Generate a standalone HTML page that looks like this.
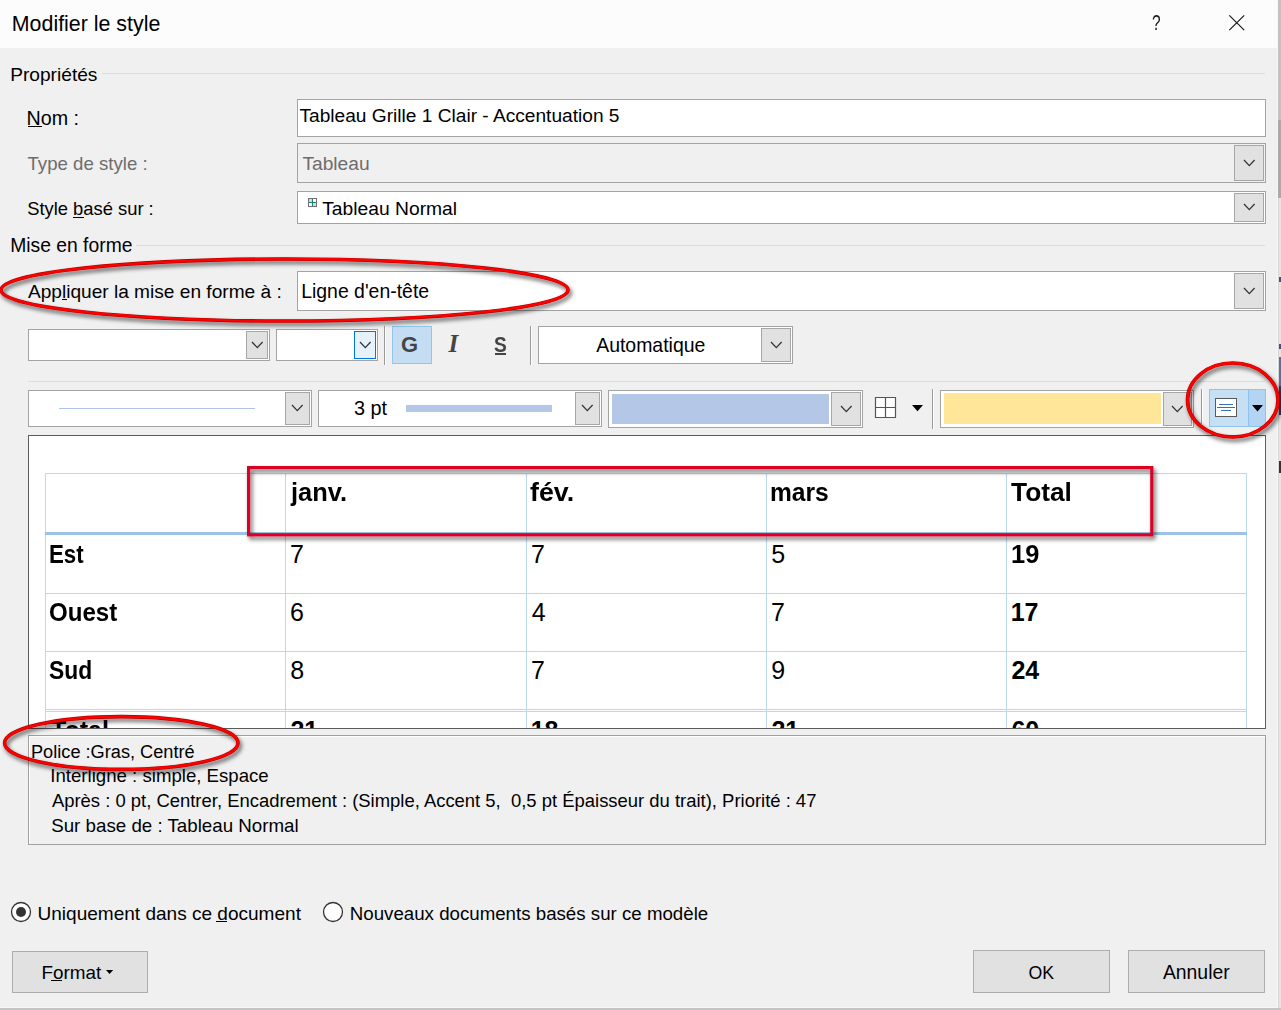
<!DOCTYPE html><html><head><meta charset="utf-8"><style>
html,body{margin:0;padding:0;}
body{width:1281px;height:1010px;position:relative;overflow:hidden;background:#c8c8c8;font-family:"Liberation Sans",sans-serif;}
.t{position:absolute;line-height:1;white-space:pre;}
.r{position:absolute;}
u{text-decoration:none;border-bottom:1px solid currentColor;}
</style></head><body>
<div class="r" style="left:0px;top:0px;width:1278px;height:1008px;background:#f0f0f0;"></div>
<div class="r" style="left:0px;top:0px;width:1278px;height:48px;background:#fcfcfc;"></div>
<div class="t" style="left:11.8px;top:14.00px;font-size:21.39px;color:#000;font-weight:normal;">Modifier le style</div>
<div class="t" style="left:1151.8px;top:13.00px;font-size:21.5px;color:#1a1a1a;font-weight:normal;transform:scaleX(0.72);transform-origin:0 0;">?</div>
<svg class="r" style="left:1228px;top:14px" width="18" height="18"><path d="M1.3,1.3 L16.2,16.2 M16.2,1.3 L1.3,16.2" stroke="#1a1a1a" stroke-width="1.2"/></svg>
<div class="t" style="left:10.2px;top:65.00px;font-size:19.15px;color:#000;font-weight:normal;">Propriétés</div>
<div class="r" style="left:102px;top:73px;width:1163px;height:1px;background:#dcdcdc;"></div>
<div class="t" style="left:26.5px;top:109.00px;font-size:19.7px;color:#000;font-weight:normal;">Nom :</div>
<div class="r" style="left:28px;top:126px;width:14px;height:1px;background:#000;"></div>
<div class="r" style="left:297px;top:99px;width:969px;height:38px;background:#fff;border:1px solid #a3a3a3;box-sizing:border-box;"></div>
<div class="t" style="left:299.5px;top:106.00px;font-size:19.14px;color:#000;font-weight:normal;">Tableau Grille 1 Clair - Accentuation 5</div>
<div class="t" style="left:27.5px;top:155.00px;font-size:18.64px;color:#6d6d6d;font-weight:normal;">Type de style :</div>
<div class="r" style="left:297px;top:143px;width:969px;height:40px;background:#f0f0f0;border:1px solid #a3a3a3;box-sizing:border-box;"></div>
<div class="r" style="left:1234px;top:145px;width:30px;height:36px;background:#e1e1e1;border:1px solid #a6a6a6;box-sizing:border-box;"></div>
<svg class="r" style="left:1241.6px;top:157.6px" width="14.6" height="9.6"><polyline points="2,2 7.3,7.6 12.6,2" fill="none" stroke="#333" stroke-width="1.25"/></svg>
<div class="t" style="left:302.4px;top:154.00px;font-size:19.21px;color:#6d6d6d;font-weight:normal;">Tableau</div>
<div class="t" style="left:27.2px;top:200.00px;font-size:18.36px;color:#000;font-weight:normal;">Style basé sur :</div>
<div class="r" style="left:73px;top:217px;width:11px;height:1px;background:#000;"></div>
<div class="r" style="left:297px;top:191px;width:969px;height:33px;background:#fff;border:1px solid #a3a3a3;box-sizing:border-box;"></div>
<div class="r" style="left:1234px;top:193px;width:30px;height:29px;background:#e1e1e1;border:1px solid #a6a6a6;box-sizing:border-box;"></div>
<svg class="r" style="left:1241.6px;top:202.1px" width="14.6" height="9.6"><polyline points="2,2 7.3,7.6 12.6,2" fill="none" stroke="#333" stroke-width="1.25"/></svg>
<div class="r" style="left:308px;top:198px;width:9px;height:9px;background:#fff;border:1px solid #707070;box-sizing:border-box;"></div>
<div class="r" style="left:309px;top:199px;width:3px;height:3px;background:#d6d6d6;"></div>
<div class="r" style="left:313px;top:203px;width:3px;height:3px;background:#d2d9e6;"></div>
<div class="r" style="left:312px;top:199px;width:1px;height:7px;background:#108a72;"></div>
<div class="r" style="left:309px;top:202px;width:7px;height:1px;background:#108a72;"></div>
<div class="t" style="left:322.2px;top:199.00px;font-size:19.28px;color:#000;font-weight:normal;">Tableau Normal</div>
<div class="t" style="left:10.2px;top:236.00px;font-size:19.31px;color:#000;font-weight:normal;">Mise en forme</div>
<div class="r" style="left:136px;top:245px;width:1129px;height:1px;background:#dcdcdc;"></div>
<div class="t" style="left:27.9px;top:282.00px;font-size:19.11px;color:#000;font-weight:normal;">Appliquer la mise en forme à :</div>
<div class="r" style="left:62px;top:299px;width:5px;height:1px;background:#000;"></div>
<div class="r" style="left:297px;top:271px;width:969px;height:40px;background:#fff;border:1px solid #a3a3a3;box-sizing:border-box;"></div>
<div class="r" style="left:1234px;top:273px;width:30px;height:36px;background:#e1e1e1;border:1px solid #a6a6a6;box-sizing:border-box;"></div>
<svg class="r" style="left:1241.6px;top:285.6px" width="14.6" height="9.6"><polyline points="2,2 7.3,7.6 12.6,2" fill="none" stroke="#333" stroke-width="1.25"/></svg>
<div class="t" style="left:301.2px;top:282.00px;font-size:19.43px;color:#000;font-weight:normal;">Ligne d'en-tête</div>
<div class="r" style="left:28px;top:329px;width:242px;height:32px;background:#fff;border:1px solid #a3a3a3;box-sizing:border-box;"></div>
<div class="r" style="left:246px;top:331px;width:22px;height:28px;background:#e1e1e1;border:1px solid #a6a6a6;box-sizing:border-box;"></div>
<svg class="r" style="left:249.6px;top:339.6px" width="14.6" height="9.6"><polyline points="2,2 7.3,7.6 12.6,2" fill="none" stroke="#333" stroke-width="1.25"/></svg>
<div class="r" style="left:276px;top:329px;width:102px;height:32px;background:#fff;border:1px solid #a3a3a3;box-sizing:border-box;"></div>
<div class="r" style="left:354px;top:331px;width:22px;height:28px;background:#e5f1fb;border:1px solid #0078d7;box-sizing:border-box;"></div>
<svg class="r" style="left:357.6px;top:339.6px" width="14.6" height="9.6"><polyline points="2,2 7.3,7.6 12.6,2" fill="none" stroke="#333" stroke-width="1.25"/></svg>
<div class="r" style="left:384px;top:326px;width:1px;height:39px;background:#999;"></div>
<div class="r" style="left:385px;top:326px;width:1px;height:39px;background:#fff;"></div>
<div class="r" style="left:392px;top:326px;width:40px;height:38px;background:#c4ddf3;border:1px solid #90c6f0;box-sizing:border-box;"></div>
<div class="t" style="left:400.9px;top:334.00px;font-size:22px;color:#444;font-weight:bold;">G</div>
<div class="t" style="left:448.4px;top:331.00px;font-size:25px;color:#444;font-weight:bold;font-family:Liberation Serif,serif;font-style:italic;">I</div>
<div class="t" style="left:494.1px;top:334.00px;font-size:22.5px;color:#444;font-weight:bold;transform:scaleX(0.85);transform-origin:0 0;">S</div>
<div class="r" style="left:495px;top:353px;width:11px;height:2px;background:#444;"></div>
<div class="r" style="left:530px;top:326px;width:1px;height:39px;background:#999;"></div>
<div class="r" style="left:531px;top:326px;width:1px;height:39px;background:#fff;"></div>
<div class="r" style="left:538px;top:326px;width:255px;height:38px;background:#fff;border:1px solid #a3a3a3;box-sizing:border-box;"></div>
<div class="r" style="left:761px;top:328px;width:30px;height:34px;background:#e1e1e1;border:1px solid #a6a6a6;box-sizing:border-box;"></div>
<svg class="r" style="left:768.6px;top:339.6px" width="14.6" height="9.6"><polyline points="2,2 7.3,7.6 12.6,2" fill="none" stroke="#333" stroke-width="1.25"/></svg>
<div class="t" style="left:596.2px;top:336.00px;font-size:19.44px;color:#000;font-weight:normal;">Automatique</div>
<div class="r" style="left:28px;top:381px;width:1237px;height:1px;background:#dcdcdc;"></div>
<div class="r" style="left:28px;top:390px;width:284px;height:37px;background:#fff;border:1px solid #a3a3a3;box-sizing:border-box;"></div>
<div class="r" style="left:285px;top:392px;width:25px;height:33px;background:#e1e1e1;border:1px solid #a6a6a6;box-sizing:border-box;"></div>
<svg class="r" style="left:290.1px;top:403.1px" width="14.6" height="9.6"><polyline points="2,2 7.3,7.6 12.6,2" fill="none" stroke="#333" stroke-width="1.25"/></svg>
<div class="r" style="left:59px;top:408px;width:196px;height:1px;background:#b0c4e8;"></div>
<div class="r" style="left:318px;top:390px;width:284px;height:37px;background:#fff;border:1px solid #a3a3a3;box-sizing:border-box;"></div>
<div class="r" style="left:575px;top:392px;width:25px;height:33px;background:#e1e1e1;border:1px solid #a6a6a6;box-sizing:border-box;"></div>
<svg class="r" style="left:580.1px;top:403.1px" width="14.6" height="9.6"><polyline points="2,2 7.3,7.6 12.6,2" fill="none" stroke="#333" stroke-width="1.25"/></svg>
<div class="t" style="left:353.9px;top:399.00px;font-size:19.88px;color:#000;font-weight:normal;">3 pt</div>
<div class="r" style="left:406px;top:405px;width:146px;height:7px;background:#b4c7e7;"></div>
<div class="r" style="left:608px;top:390px;width:255px;height:38px;background:#fff;border:1px solid #a3a3a3;box-sizing:border-box;"></div>
<div class="r" style="left:831px;top:392px;width:30px;height:34px;background:#e1e1e1;border:1px solid #a6a6a6;box-sizing:border-box;"></div>
<svg class="r" style="left:838.6px;top:403.6px" width="14.6" height="9.6"><polyline points="2,2 7.3,7.6 12.6,2" fill="none" stroke="#333" stroke-width="1.25"/></svg>
<div class="r" style="left:612px;top:394px;width:217px;height:30px;background:#b4c7e7;"></div>
<svg class="r" style="left:874px;top:396px" width="24" height="24"><path d="M1.5,1.5 H21.5 V21.5 H1.5 Z" fill="#fff"/><path d="M1.5,1.5 H21.5 V21.5 H1.5 Z M11.5,1.5 V21.5 M1.5,11.5 H21.5" fill="none" stroke="#555" stroke-width="1.2"/></svg>
<svg class="r" style="left:912px;top:405px" width="12" height="7"><path d="M0,0 H11 L5.5,6.3 Z" fill="#000"/></svg>
<div class="r" style="left:932px;top:389px;width:1px;height:40px;background:#999;"></div>
<div class="r" style="left:933px;top:389px;width:1px;height:40px;background:#fff;"></div>
<div class="r" style="left:940px;top:390px;width:254px;height:38px;background:#fff;border:1px solid #a3a3a3;box-sizing:border-box;"></div>
<div class="r" style="left:1163px;top:392px;width:29px;height:34px;background:#e1e1e1;border:1px solid #a6a6a6;box-sizing:border-box;"></div>
<svg class="r" style="left:1170.1px;top:403.6px" width="14.6" height="9.6"><polyline points="2,2 7.3,7.6 12.6,2" fill="none" stroke="#333" stroke-width="1.25"/></svg>
<div class="r" style="left:944px;top:393px;width:217px;height:31px;background:#ffe699;"></div>
<div class="r" style="left:1201px;top:389px;width:1px;height:35px;background:#999;"></div>
<div class="r" style="left:1202px;top:389px;width:1px;height:35px;background:#fff;"></div>
<div class="r" style="left:1209px;top:389px;width:57px;height:38px;background:#c5dff5;border:1px solid #8fc3ee;box-sizing:border-box;"></div>
<div class="r" style="left:1248px;top:389px;width:18px;height:38px;background:#b3d5f3;border:1px solid #8fc3ee;box-sizing:border-box;"></div>
<div class="r" style="left:1215px;top:398px;width:22px;height:19px;background:#fff;border:1px solid #5a5a5a;box-sizing:border-box;"></div>
<div class="r" style="left:1219px;top:404px;width:14px;height:1px;background:#2e75b6;"></div>
<div class="r" style="left:1217px;top:407px;width:18px;height:1px;background:#2e75b6;"></div>
<div class="r" style="left:1221px;top:410px;width:10px;height:1px;background:#2e75b6;"></div>
<svg class="r" style="left:1252px;top:405px" width="12" height="7"><path d="M0,0 H11 L5.5,6.5 Z" fill="#000"/></svg>
<div class="r" style="left:28px;top:435px;width:1238px;height:294px;background:#fff;border:1px solid #5c5c5c;box-sizing:border-box;overflow:hidden;"></div>
<div class="r" style="left:29px;top:436px;width:1236px;height:292px;overflow:hidden;"><div class="r" style="left:16px;top:37px;width:1202px;height:1px;background:#bdd7ee;"></div>
<div class="r" style="left:16px;top:37px;width:1px;height:287px;background:#bdd7ee;"></div>
<div class="r" style="left:256px;top:37px;width:1px;height:287px;background:#bdd7ee;"></div>
<div class="r" style="left:497px;top:37px;width:1px;height:287px;background:#bdd7ee;"></div>
<div class="r" style="left:737px;top:37px;width:1px;height:287px;background:#bdd7ee;"></div>
<div class="r" style="left:977px;top:37px;width:1px;height:287px;background:#bdd7ee;"></div>
<div class="r" style="left:1217px;top:37px;width:1px;height:287px;background:#bdd7ee;"></div>
<div class="r" style="left:16px;top:96px;width:1202px;height:3px;background:#9cc2e5;"></div>
<div class="r" style="left:16px;top:157px;width:1202px;height:1px;background:#bdd7ee;"></div>
<div class="r" style="left:16px;top:215px;width:1202px;height:1px;background:#bdd7ee;"></div>
<div class="r" style="left:16px;top:273px;width:1202px;height:1px;background:#bdd7ee;"></div>
<div class="r" style="left:16px;top:275px;width:1202px;height:1px;background:#bdd7ee;"></div>
<div class="t" style="left:262.13px;top:44.00px;font-size:25px;font-weight:bold;color:#000;transform:scaleX(1.0186);transform-origin:0 0">janv.</div><div class="t" style="left:500.70px;top:44.00px;font-size:25px;font-weight:bold;color:#000;transform:scaleX(1.0709);transform-origin:0 0">fév.</div><div class="t" style="left:740.60px;top:44.00px;font-size:25px;font-weight:bold;color:#000;transform:scaleX(0.9838);transform-origin:0 0">mars</div><div class="t" style="left:981.84px;top:44.00px;font-size:25px;font-weight:bold;color:#000;transform:scaleX(1.0529);transform-origin:0 0">Total</div><div class="t" style="left:19.55px;top:106.00px;font-size:25px;font-weight:bold;color:#000;transform:scaleX(0.8919);transform-origin:0 0">Est</div><div class="t" style="left:261.05px;top:106.00px;font-size:25px;font-weight:normal;color:#000;transform:scaleX(1.0000);transform-origin:0 0">7</div><div class="t" style="left:502.05px;top:106.00px;font-size:25px;font-weight:normal;color:#000;transform:scaleX(1.0000);transform-origin:0 0">7</div><div class="t" style="left:742.30px;top:106.00px;font-size:25px;font-weight:normal;color:#000;transform:scaleX(1.0000);transform-origin:0 0">5</div><div class="t" style="left:981.75px;top:106.00px;font-size:25px;font-weight:bold;color:#000;transform:scaleX(1.0178);transform-origin:0 0">19</div><div class="t" style="left:20.04px;top:164.00px;font-size:25px;font-weight:bold;color:#000;transform:scaleX(0.9640);transform-origin:0 0">Ouest</div><div class="t" style="left:261.05px;top:164.00px;font-size:25px;font-weight:normal;color:#000;transform:scaleX(1.0000);transform-origin:0 0">6</div><div class="t" style="left:502.67px;top:164.00px;font-size:25px;font-weight:normal;color:#000;transform:scaleX(1.0000);transform-origin:0 0">4</div><div class="t" style="left:742.05px;top:164.00px;font-size:25px;font-weight:normal;color:#000;transform:scaleX(1.0000);transform-origin:0 0">7</div><div class="t" style="left:981.67px;top:164.00px;font-size:25px;font-weight:bold;color:#000;transform:scaleX(1.0000);transform-origin:0 0">17</div><div class="t" style="left:20.31px;top:222.00px;font-size:25px;font-weight:bold;color:#000;transform:scaleX(0.9136);transform-origin:0 0">Sud</div><div class="t" style="left:261.18px;top:222.00px;font-size:25px;font-weight:normal;color:#000;transform:scaleX(1.0000);transform-origin:0 0">8</div><div class="t" style="left:502.05px;top:222.00px;font-size:25px;font-weight:normal;color:#000;transform:scaleX(1.0000);transform-origin:0 0">7</div><div class="t" style="left:742.17px;top:222.00px;font-size:25px;font-weight:normal;color:#000;transform:scaleX(1.0000);transform-origin:0 0">9</div><div class="t" style="left:982.42px;top:222.00px;font-size:25px;font-weight:bold;color:#000;transform:scaleX(1.0000);transform-origin:0 0">24</div><div class="t" style="left:22.05px;top:282.00px;font-size:25px;font-weight:bold;color:#000;transform:scaleX(1.0000);transform-origin:0 0">Total</div><div class="t" style="left:261.43px;top:282.00px;font-size:25px;font-weight:bold;color:#000;transform:scaleX(1.0000);transform-origin:0 0">21</div><div class="t" style="left:501.67px;top:282.00px;font-size:25px;font-weight:bold;color:#000;transform:scaleX(1.0000);transform-origin:0 0">18</div><div class="t" style="left:742.42px;top:282.00px;font-size:25px;font-weight:bold;color:#000;transform:scaleX(1.0000);transform-origin:0 0">21</div><div class="t" style="left:982.42px;top:282.00px;font-size:25px;font-weight:bold;color:#000;transform:scaleX(1.0000);transform-origin:0 0">60</div></div>
<div class="r" style="left:28px;top:735px;width:1238px;height:110px;background:#f0f0f0;border:1px solid #a0a0a0;box-sizing:border-box;box-shadow:inset 1px 1px 0 #fff;"></div>
<div class="t" style="left:31.0px;top:743.00px;font-size:18.18px;color:#000;font-weight:normal;">Police :Gras, Centré</div>
<div class="t" style="left:50.3px;top:767.00px;font-size:18.64px;color:#000;font-weight:normal;">Interligne : simple, Espace</div>
<div class="t" style="left:51.9px;top:792.00px;font-size:18.44px;color:#000;font-weight:normal;">Après : 0 pt, Centrer, Encadrement : (Simple, Accent 5,  0,5 pt Épaisseur du trait), Priorité : 47</div>
<div class="t" style="left:51.2px;top:817.00px;font-size:18.74px;color:#000;font-weight:normal;">Sur base de : Tableau Normal</div>
<svg class="r" style="left:10px;top:901px" width="22" height="22"><circle cx="11" cy="11" r="9.5" fill="#fff" stroke="#333" stroke-width="1.3"/><circle cx="11" cy="11" r="5" fill="#333"/></svg>
<div class="t" style="left:37.5px;top:904.00px;font-size:19.05px;color:#000;font-weight:normal;">Uniquement dans ce document</div>
<div class="r" style="left:216px;top:921px;width:11px;height:1px;background:#000;"></div>
<svg class="r" style="left:322px;top:901px" width="22" height="22"><circle cx="11" cy="11" r="9.5" fill="#fff" stroke="#333" stroke-width="1.3"/></svg>
<div class="t" style="left:349.8px;top:905.00px;font-size:18.7px;color:#000;font-weight:normal;">Nouveaux documents basés sur ce modèle</div>
<div class="r" style="left:12px;top:951px;width:136px;height:42px;background:#e1e1e1;border:1px solid #adadad;box-sizing:border-box;"></div>
<div class="t" style="left:41.5px;top:964.00px;font-size:18.87px;color:#000;font-weight:normal;">Format</div>
<div class="r" style="left:51px;top:980px;width:11px;height:1px;background:#000;"></div>
<svg class="r" style="left:106px;top:970px" width="8" height="5"><path d="M0,0 H7.2 L3.6,4 Z" fill="#000"/></svg>
<div class="r" style="left:973px;top:950px;width:137px;height:43px;background:#e1e1e1;border:1px solid #adadad;box-sizing:border-box;"></div>
<div class="t" style="left:1028.6px;top:965.00px;font-size:17.7px;color:#000;font-weight:normal;">OK</div>
<div class="r" style="left:1128px;top:950px;width:137px;height:43px;background:#e1e1e1;border:1px solid #adadad;box-sizing:border-box;"></div>
<div class="t" style="left:1162.9px;top:963.00px;font-size:19.39px;color:#000;font-weight:normal;">Annuler</div>
<div class="r" style="left:1277px;top:0px;width:1px;height:1008px;background:#f7f7f7;"></div>
<div class="r" style="left:1278px;top:0px;width:3px;height:1010px;background:#d6d6d6;"></div>
<div class="r" style="left:1278px;top:0px;width:3px;height:120px;background:#c2c2c2;"></div>
<div class="r" style="left:1278px;top:120px;width:3px;height:78px;background:#aaaaaa;"></div>
<div class="r" style="left:1279px;top:198px;width:2px;height:810px;background:#e4e4e4;"></div>
<div class="r" style="left:1279px;top:277px;width:2px;height:5px;background:#2f5597;"></div>
<div class="r" style="left:1279px;top:344px;width:2px;height:5px;background:#2f5597;"></div>
<div class="r" style="left:1279px;top:357px;width:2px;height:29px;background:#4a72b8;"></div>
<div class="r" style="left:1279px;top:386px;width:2px;height:29px;background:#24427f;"></div>
<div class="r" style="left:1279px;top:461px;width:2px;height:12px;background:#333;"></div>
<div class="r" style="left:0px;top:1008px;width:1281px;height:2px;background:#c4c4c4;"></div>
<div class="r" style="left:0px;top:1007px;width:1278px;height:1px;background:#f7f7f7;"></div>
<svg class="r" style="left:0;top:0" width="1281" height="1010">
<defs><filter id="sh" x="-20%" y="-50%" width="140%" height="200%"><feGaussianBlur in="SourceAlpha" stdDeviation="2"/><feOffset dx="2" dy="3"/><feComponentTransfer><feFuncA type="linear" slope="0.62"/></feComponentTransfer><feMerge><feMergeNode/><feMergeNode in="SourceGraphic"/></feMerge></filter></defs>
<g filter="url(#sh)">
<ellipse cx="284.5" cy="290" rx="283.5" ry="31" fill="none" stroke="#b40000" stroke-width="3.6"/>
<ellipse cx="284.5" cy="290" rx="283.5" ry="31" fill="none" stroke="#ff0000" stroke-width="2.4"/>
<ellipse cx="1232.75" cy="400" rx="45.25" ry="37" fill="none" stroke="#b40000" stroke-width="3.6"/>
<ellipse cx="1232.75" cy="400" rx="45.25" ry="37" fill="none" stroke="#ff0000" stroke-width="2.4"/>
<ellipse cx="121.3" cy="743" rx="116.7" ry="26.4" fill="none" stroke="#b40000" stroke-width="3.6"/>
<ellipse cx="121.3" cy="743" rx="116.7" ry="26.4" fill="none" stroke="#ff0000" stroke-width="2.4"/>
<rect x="248.6" y="467.6" width="903.2" height="67.2" fill="none" stroke="#da0026" stroke-width="3.2"/>
</g></svg>
</body></html>
